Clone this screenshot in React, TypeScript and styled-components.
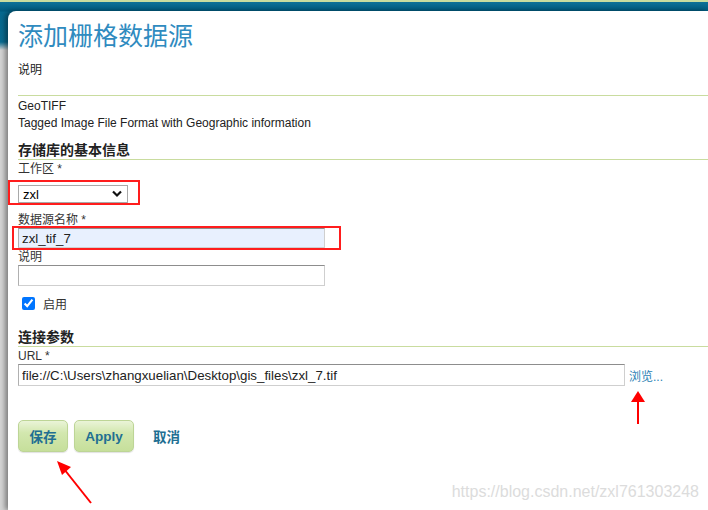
import React from 'react'
import styled, { createGlobalStyle } from 'styled-components'

const GlobalStyle = createGlobalStyle`
  * { box-sizing: border-box; }
  html, body { margin: 0; padding: 0; background: #fff; }
  body {
    font-family: 'Liberation Sans', 'Noto Sans CJK SC', sans-serif;
    font-size: 12px;
    color: #222;
    overflow: hidden;
  }
`

const Page = styled.div`
  position: relative;
  width: 708px;
  height: 510px;
  overflow: hidden;
  border-top: 2px solid #c9dc9f;
  background: linear-gradient(
    to bottom,
    #0d7198 0,
    #005a7e 9px,
    #05688e 10px,
    #0a6b90 40px,
    #d4d4d4 48px,
    #d4d4d4 100%
  );
  display: flex;
`

const Panel = styled.div`
  flex: 1;
  margin: 9px 0 0 8px;
  padding: 5px 0 0 10px;
  background: #fff;
  border-top-left-radius: 8px;
  box-shadow: -3px 0 5px rgba(0, 0, 0, 0.4);
`

const Title = styled.h1`
  margin: 0;
  font-family: 'Noto Sans CJK SC', sans-serif;
  font-size: 25px;
  line-height: 36px;
  font-weight: normal;
  color: #2f8bbf;
`

const Text = styled.div`
  font-size: 12px;
  line-height: 17px;
`

const Intro = styled(Text)`
  margin-top: 10px;
  padding-bottom: 16px;
  border-bottom: 1px solid #c9dc9f;
`

const Details = styled.div`
  padding-top: 2px;
`

const SectionTitle = styled.h3<{ $gap: number }>`
  margin: ${(p) => p.$gap}px 0 0;
  font-size: 14px;
  line-height: 18px;
  font-weight: bold;
  color: #222;
  border-bottom: 1px solid #c9dc9f;
`

const Label = styled.label<{ $gap?: number }>`
  display: block;
  margin-top: ${(p) => p.$gap ?? 1}px;
  font-size: 12px;
  line-height: 16px;
  color: #333;
`

const Marked = styled.div<{ $t: number; $l: number; $r: number; $b: number }>`
  position: relative;
  width: fit-content;

  &::after {
    content: '';
    position: absolute;
    top: ${(p) => p.$t}px;
    left: ${(p) => p.$l}px;
    right: ${(p) => p.$r}px;
    bottom: ${(p) => p.$b}px;
    border: 2px solid #ff1d1d;
    pointer-events: none;
  }
`

const SelectBox = styled.div`
  position: relative;
  margin-top: 8px;
  width: 110px;
  height: 18px;
`

const Select = styled.select`
  appearance: none;
  width: 100%;
  height: 100%;
  padding: 0 0 0 4px;
  border: 1px solid #a9a9a9;
  border-radius: 0;
  background: #fff;
  font-family: 'Liberation Sans', sans-serif;
  font-size: 13px;
  color: #000;
  outline: none;
`

const Chevron = styled.svg`
  position: absolute;
  right: 6px;
  top: 5px;
  pointer-events: none;
`

const Input = styled.input<{ $w: number; $h: number; $filled?: boolean }>`
  display: block;
  width: ${(p) => p.$w}px;
  height: ${(p) => p.$h}px;
  margin: 0;
  padding: 0 3px;
  border: 1px solid #cfcfcf;
  border-top-color: #8d8d8d;
  border-left-color: #b0b0b0;
  background: ${(p) => (p.$filled ? '#e8f0fe' : '#fff')};
  font-family: 'Liberation Sans', sans-serif;
  font-size: 13.3px;
  color: #222;
  outline: none;
`

const CheckRow = styled.label`
  display: flex;
  align-items: center;
  gap: 8px;
  margin-top: 9px;
  padding-left: 4px;
  height: 16px;
  font-size: 12px;
  color: #333;

  input {
    margin: 0;
    width: 13px;
    height: 13px;
  }
`

const UrlRow = styled.div`
  display: flex;
  align-items: center;
  gap: 4px;
`

const Link = styled.a`
  font-size: 12px;
  color: #2a82b4;
  text-decoration: none;
`

const Actions = styled.div`
  display: flex;
  align-items: center;
  gap: 6px;
  margin-top: 34px;
`

const Button = styled.button<{ $w: number }>`
  width: ${(p) => p.$w}px;
  height: 32px;
  padding: 0;
  border: 1px solid #bdd596;
  border-radius: 5px;
  background: linear-gradient(to bottom, #eaf4d8 0%, #d2e7ae 40%, #c6df9b 100%);
  box-shadow: 0 1px 1px rgba(0, 0, 0, 0.12);
  font-family: 'Liberation Sans', 'Noto Sans CJK SC', sans-serif;
  font-size: 13.5px;
  font-weight: bold;
  color: #216f92;
`

const Cancel = styled.a`
  margin-left: 13px;
  font-size: 13.5px;
  font-weight: bold;
  color: #216f92;
`

const Annotations = styled.svg`
  position: absolute;
  inset: 0;
  pointer-events: none;
`

const Watermark = styled.div`
  position: absolute;
  right: 9px;
  bottom: 9px;
  font-family: 'Liberation Sans', sans-serif;
  font-size: 16px;
  color: #dcdcdc;
  text-shadow: 0 0 1px #fff;
  pointer-events: none;
`

export default function App() {
  return (
    <>
      <GlobalStyle />
      <Page>
        <Panel>
          <Title>添加栅格数据源</Title>
          <Intro>说明</Intro>

          <Details>
            <Text>GeoTIFF</Text>
            <Text>Tagged Image File Format with Geographic information</Text>
          </Details>

          <SectionTitle $gap={9}>存储库的基本信息</SectionTitle>
          <Label>工作区 *</Label>
          <Marked $t={-5} $l={-10} $r={-12} $b={-2}>
            <SelectBox>
              <Select defaultValue="zxl">
                <option value="zxl">zxl</option>
              </Select>
              <Chevron width="10" height="8" viewBox="0 0 10 8">
                <path d="M1 1.5 L5 5.5 L9 1.5" fill="none" stroke="#111" strokeWidth="2.2" />
              </Chevron>
            </SelectBox>
          </Marked>

          <Label $gap={9}>数据源名称 *</Label>
          <Marked $t={-2} $l={-6} $r={-16} $b={-2}>
            <Input $w={307} $h={20} $filled defaultValue="zxl_tif_7" />
          </Marked>

          <Label>说明</Label>
          <Input $w={307} $h={21} />

          <CheckRow>
            <input type="checkbox" defaultChecked />
            启用
          </CheckRow>

          <SectionTitle $gap={17}>连接参数</SectionTitle>
          <Label>URL *</Label>
          <UrlRow>
            <Input
              $w={607}
              $h={22}
              defaultValue="file://C:\Users\zhangxuelian\Desktop\gis_files\zxl_7.tif"
            />
            <Link href="#">浏览...</Link>
          </UrlRow>

          <Actions>
            <Button $w={50}>保存</Button>
            <Button $w={60}>Apply</Button>
            <Cancel>取消</Cancel>
          </Actions>
        </Panel>

        <Annotations width="708" height="510" viewBox="0 0 708 510">
          <line x1="638" y1="422" x2="638" y2="398" stroke="#ff0000" strokeWidth="2" />
          <polygon points="638,389 631,400 645,400" fill="#ff0000" />
          <line x1="91" y1="501" x2="64" y2="467" stroke="#ff0000" strokeWidth="2" />
          <polygon points="57,459 71,465 62,473" fill="#ff0000" />
        </Annotations>

        <Watermark>https://blog.csdn.net/zxl761303248</Watermark>
      </Page>
    </>
  )
}
